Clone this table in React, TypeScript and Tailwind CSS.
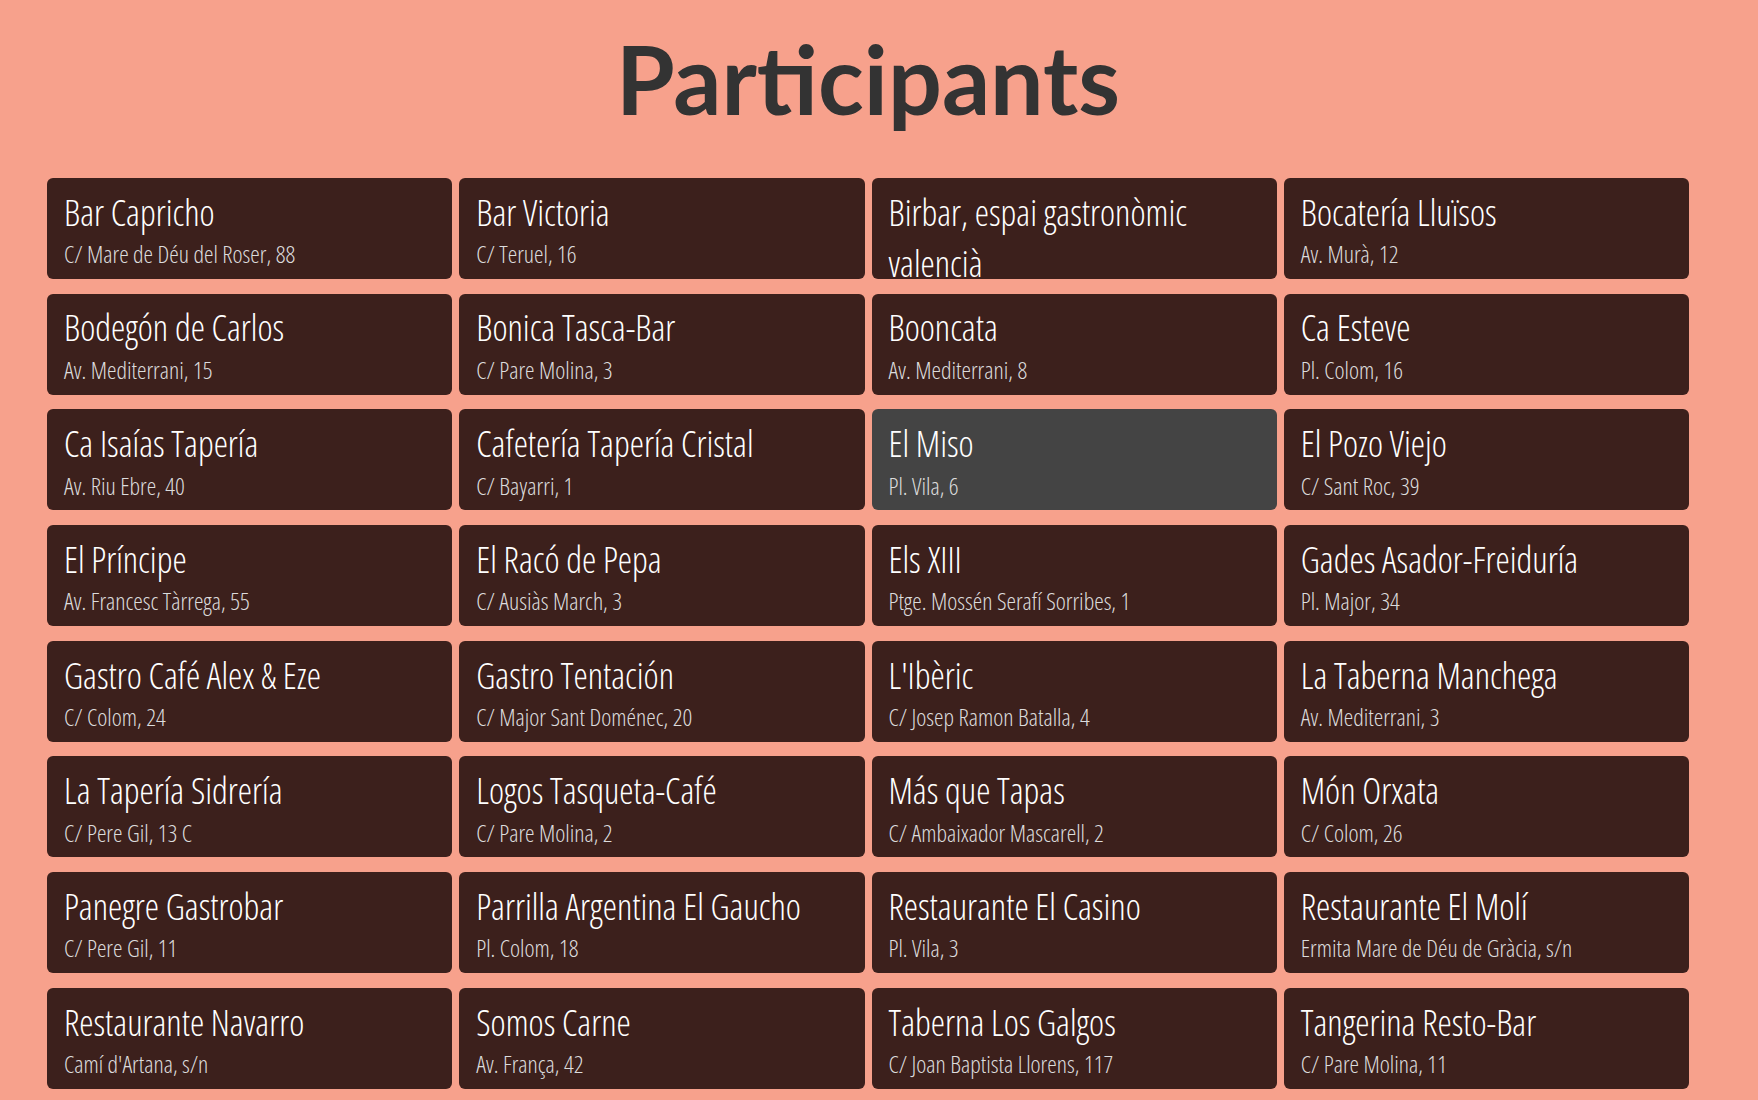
import React from "react";

type P = { name: string; addr?: string; active?: boolean };

const items: P[] = [
  { name: "Bar Capricho", addr: "C/ Mare de Déu del Roser, 88" },
  { name: "Bar Victoria", addr: "C/ Teruel, 16" },
  { name: "Birbar, espai gastronòmic valencià" },
  { name: "Bocatería Lluïsos", addr: "Av. Murà, 12" },
  { name: "Bodegón de Carlos", addr: "Av. Mediterrani, 15" },
  { name: "Bonica Tasca-Bar", addr: "C/ Pare Molina, 3" },
  { name: "Booncata", addr: "Av. Mediterrani, 8" },
  { name: "Ca Esteve", addr: "Pl. Colom, 16" },
  { name: "Ca Isaías Tapería", addr: "Av. Riu Ebre, 40" },
  { name: "Cafetería Tapería Cristal", addr: "C/ Bayarri, 1" },
  { name: "El Miso", addr: "Pl. Vila, 6", active: true },
  { name: "El Pozo Viejo", addr: "C/ Sant Roc, 39" },
  { name: "El Príncipe", addr: "Av. Francesc Tàrrega, 55" },
  { name: "El Racó de Pepa", addr: "C/ Ausiàs March, 3" },
  { name: "Els XIII", addr: "Ptge. Mossén Serafí Sorribes, 1" },
  { name: "Gades Asador-Freiduría", addr: "Pl. Major, 34" },
  { name: "Gastro Café Alex & Eze", addr: "C/ Colom, 24" },
  { name: "Gastro Tentación", addr: "C/ Major Sant Doménec, 20" },
  { name: "L'Ibèric", addr: "C/ Josep Ramon Batalla, 4" },
  { name: "La Taberna Manchega", addr: "Av. Mediterrani, 3" },
  { name: "La Tapería Sidrería", addr: "C/ Pere Gil, 13 C" },
  { name: "Logos Tasqueta-Café", addr: "C/ Pare Molina, 2" },
  { name: "Más que Tapas", addr: "C/ Ambaixador Mascarell, 2" },
  { name: "Món Orxata", addr: "C/ Colom, 26" },
  { name: "Panegre Gastrobar", addr: "C/ Pere Gil, 11" },
  { name: "Parrilla Argentina El Gaucho", addr: "Pl. Colom, 18" },
  { name: "Restaurante El Casino", addr: "Pl. Vila, 3" },
  { name: "Restaurante El Molí", addr: "Ermita Mare de Déu de Gràcia, s/n" },
  { name: "Restaurante Navarro", addr: "Camí d'Artana, s/n" },
  { name: "Somos Carne", addr: "Av. França, 42" },
  { name: "Taberna Los Galgos", addr: "C/ Joan Baptista Llorens, 117" },
  { name: "Tangerina Resto-Bar", addr: "C/ Pare Molina, 11" },
];

const cond: React.CSSProperties = { fontStretch: "75%" };

export default function App() {
  return (
    <div className="min-h-[1100px] w-full overflow-hidden bg-[#f7a18c]">
      <div className="pr-[22px] pt-[31px]">
        <h1 className="text-center font-['Lato',sans-serif] text-[95px] font-bold leading-[95px] text-[#333333]">
          Participants
        </h1>
      </div>
      <div className="ml-[47px] mt-[52px] grid w-[1642px] grid-cols-4 gap-x-[7px] gap-y-[14.7px]">
        {items.map((p) => (
          <a
            key={p.name}
            href="#"
            className={
              "block h-[101px] overflow-hidden rounded-[6px] px-[17px] pt-[8.8px] font-['Open_Sans',sans-serif] font-light " +
              (p.active ? "bg-[#444444]" : "bg-[#3c201c]")
            }
            style={cond}
          >
            <div className="text-[36px] leading-[51.4px] text-white">{p.name}</div>
            {p.addr && (
              <div className="text-[24px] leading-[31.3px] text-[#dcdcdc]">{p.addr}</div>
            )}
          </a>
        ))}
      </div>
    </div>
  );
}
